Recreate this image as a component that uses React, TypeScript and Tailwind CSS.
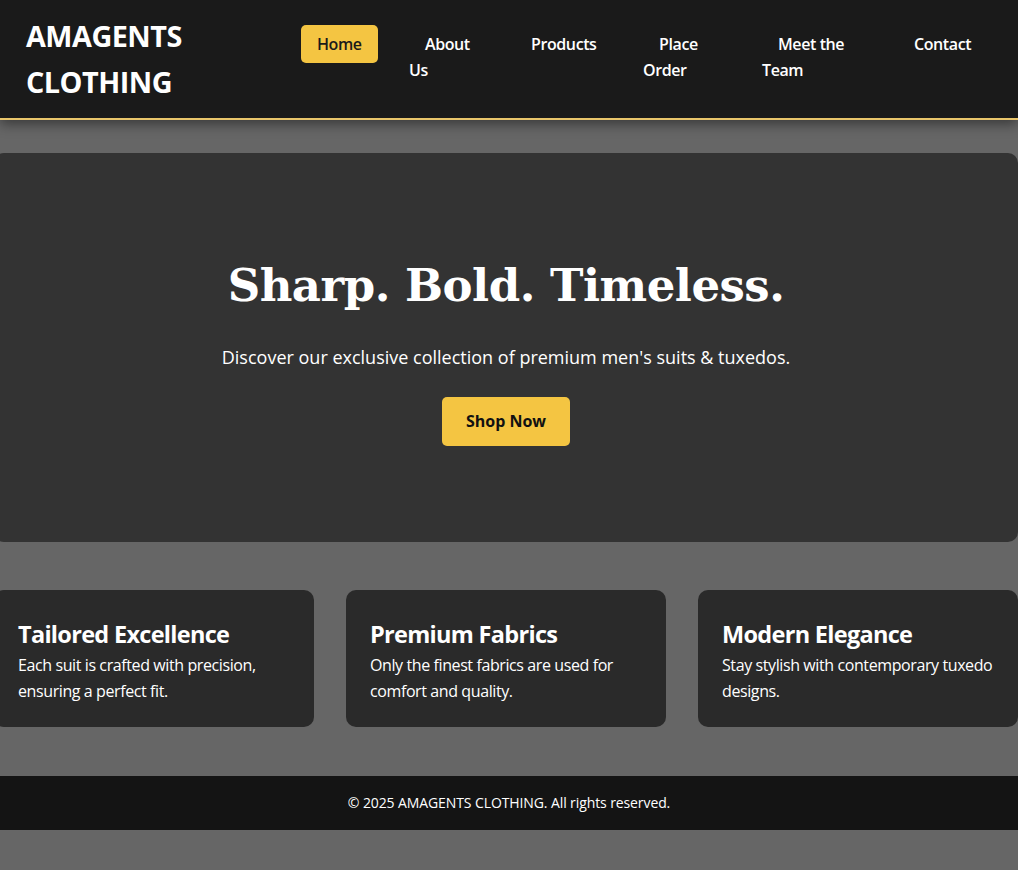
import React from "react";

const links = [
  { label: "Home", w: "w-[76px]", active: true },
  { label: "About Us", w: "w-[74px]" },
  { label: "Products", w: "w-[96px]" },
  { label: "Place Order", w: "w-[87px]" },
  { label: "Meet the Team", w: "w-[104px]" },
  { label: "Contact", w: "w-[88px]" },
];

const features = [
  { title: "Tailored Excellence", text: "Each suit is crafted with precision, ensuring a perfect fit." },
  { title: "Premium Fabrics", text: "Only the finest fabrics are used for comfort and quality." },
  { title: "Modern Elegance", text: "Stay stylish with contemporary tuxedo designs." },
];

export default function App() {
  return (
    <div className="min-h-[870px] w-full overflow-hidden bg-[#666666] font-['Open_Sans',sans-serif] leading-[1.6] text-white">
      {/* Header */}
      <header className="relative z-10 flex items-center border-b-2 border-[#e9c56b] bg-[#1a1a1a] py-[13px] pl-[26px] shadow-[0_4px_12px_rgba(0,0,0,0.45)]">
        <h1 className="w-[275px] text-[28.8px] font-bold leading-[46px] tracking-[-0.5px]">
          AMAGENTS
          <br />
          CLOTHING
        </h1>
        <nav className="-mt-1">
          <ul className="flex items-start gap-8 text-[16px] font-semibold leading-[26px] tracking-[-0.4px]">
            {links.map((l) => (
              <li key={l.label} className={l.w}>
                <a
                  className={
                    "px-4 py-2 " +
                    (l.active
                      ? "whitespace-nowrap rounded-[5px] bg-[#f4c542] text-[#1a1a1a]"
                      : l.label === "Products" || l.label === "Contact"
                        ? "whitespace-nowrap text-white"
                        : "text-white")
                  }
                >
                  {l.label}
                </a>
              </li>
            ))}
          </ul>
        </nav>
      </header>

      <main className="-ml-[6px] w-[1024px]">
        {/* Hero */}
        <section className="mt-[33px] flex flex-col items-center rounded-[10px] bg-[#333333] pb-[96px] pt-[102px] text-center">
          <h2 className="font-['DejaVu_Serif',serif] text-[45px] font-bold leading-[62px] tracking-[-0.5px]">
            Sharp. Bold. Timeless.
          </h2>
          <p className="mt-[26px] text-[18px] leading-[29px]">
            Discover our exclusive collection of premium men&apos;s suits &amp; tuxedos.
          </p>
          <button className="mt-[25px] h-[49px] rounded-[5px] bg-[#f4c542] px-6 text-[16px] font-bold text-[#111]">
            Shop Now
          </button>
        </section>

        {/* Features */}
        <section className="mt-12 flex gap-8">
          {features.map((f) => (
            <div key={f.title} className="w-[320px] rounded-[10px] bg-[#2a2a2a] px-6 pb-[23px] pt-[25px]">
              <h3 className="text-[23.5px] font-bold leading-[38px] tracking-[-0.7px]">{f.title}</h3>
              <p className="text-[16px] leading-[25.6px] tracking-[-0.4px]">{f.text}</p>
            </div>
          ))}
        </section>
      </main>

      <footer className="mt-[49px] bg-[#141414] py-4 text-center text-[14px] leading-[22px] tracking-[-0.1px]">
        © 2025 AMAGENTS CLOTHING. All rights reserved.
      </footer>
    </div>
  );
}
